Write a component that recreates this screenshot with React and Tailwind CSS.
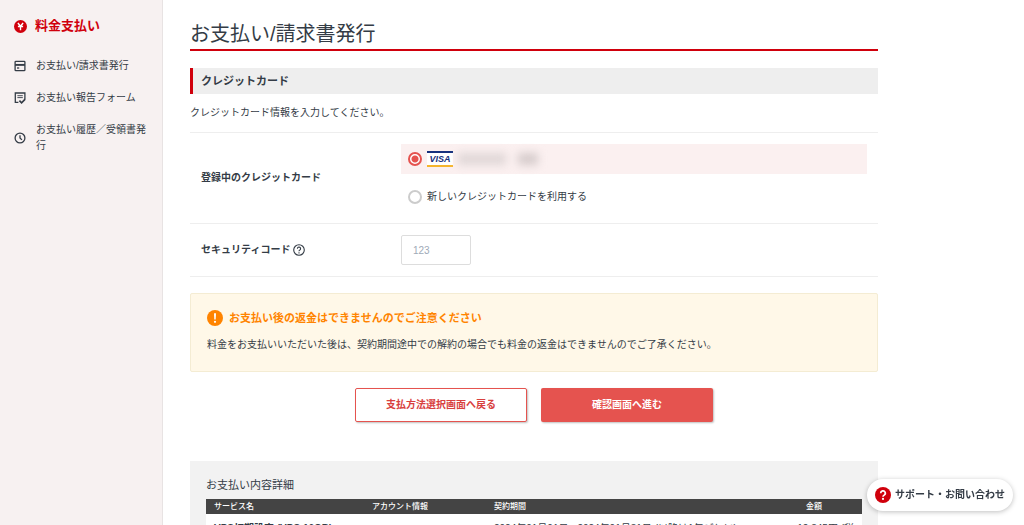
import React, { useState } from 'react';

const navItems = [
  { label: 'お支払い/請求書発行', icon: InvoiceIcon },
  { label: 'お支払い報告フォーム', icon: ReportIcon },
  { label: 'お支払い履歴／受領書発行', icon: ClockIcon },
];

const details = [
  { service: 'VPS初期設定 (VPS 16GB)', account: '-', period: '2024年01月01日 - 2024年01月31日 (以降は1年ごとに)', price: '12,345円 (税込)' },
];

function YenIcon() {
  return (
    <svg className="w-[13px] h-[13px] shrink-0" viewBox="0 0 12 12" fill="none" aria-hidden="true">
      <circle cx="6" cy="6" r="6" fill="#d0000c" />
      <path d="M3.6 2.8 6 5.8l2.4-3M6 5.6v3.8M3.6 6h4.8" stroke="#fff" strokeWidth="1.3" />
    </svg>
  );
}

function InvoiceIcon() {
  return (
    <svg className="w-3 h-3 shrink-0" viewBox="0 0 12 12" fill="none" stroke="#343c46" strokeWidth="1.3" aria-hidden="true">
      <rect x="1.1" y="1.3" width="9.8" height="9.4" rx="0.8" />
      <path d="M1.1 4.9h9.8" strokeWidth="1.9" />
      <path d="M3 8h2.2" />
    </svg>
  );
}

function ReportIcon() {
  return (
    <svg className="w-3 h-3 shrink-0" viewBox="0 0 12 12" fill="none" stroke="#343c46" strokeWidth="1.3" aria-hidden="true">
      <path d="M4.4 10.3H1.3V1h9.6v6" />
      <path d="M3.4 3.7h5.4M3.4 5.6h5.4" strokeWidth="0.9" />
      <path d="M5.4 8.6l2.2 2.2 3.6-3.6" strokeWidth="1.7" />
    </svg>
  );
}

function ClockIcon() {
  return (
    <svg className="w-3 h-3 shrink-0" viewBox="0 0 12 12" fill="none" stroke="#343c46" strokeWidth="1.3" aria-hidden="true">
      <circle cx="6" cy="6" r="4.9" />
      <path d="M6 3.2V6l1.9 1.9" />
    </svg>
  );
}

function HelpIcon() {
  return (
    <svg className="w-3 h-3" viewBox="0 0 12 12" fill="none" stroke="#343c46" strokeWidth="1.1" aria-hidden="true">
      <circle cx="6" cy="6" r="5.3" />
      <path d="M4.4 4.7a1.6 1.6 0 1 1 2.4 1.4c-.6.3-.8.6-.8 1.2" />
      <path d="M6 8.2v1.2" />
    </svg>
  );
}

function AlertIcon() {
  return (
    <svg className="w-4 h-4 shrink-0" viewBox="0 0 16 16" aria-hidden="true">
      <circle cx="8" cy="8" r="8" fill="#ff8400" />
      <path d="M7 3.2h2l-.3 6.2H7.3z" fill="#fff" />
      <circle cx="8" cy="11.8" r="1.1" fill="#fff" />
    </svg>
  );
}

function SupportIcon() {
  return (
    <svg className="w-4 h-4 shrink-0" viewBox="0 0 16 16" fill="none" aria-hidden="true">
      <circle cx="8" cy="8" r="8" fill="#d0000c" />
      <path d="M5.7 6.2a2.3 2.3 0 1 1 3.5 1.9c-.8.5-1.2.8-1.2 1.7" stroke="#fff" strokeWidth="1.7" />
      <circle cx="8" cy="11.9" r="1.1" fill="#fff" />
    </svg>
  );
}

function VisaLogo() {
  return (
    <svg className="w-[26px] h-4 shrink-0" viewBox="0 0 26 16" role="img" aria-label="VISA">
      <rect width="26" height="16" fill="#fff" />
      <rect width="26" height="2" fill="#16317d" />
      <rect y="14" width="26" height="2" fill="#f5b52e" />
      <text x="13" y="11" textAnchor="middle" fontSize="9" fontWeight="bold" fontStyle="italic" fill="#16317d">VISA</text>
    </svg>
  );
}

const radioClass = 'appearance-none w-[14px] h-[14px] shrink-0 rounded-full border-2 border-[#ccc] bg-white checked:border-[#e5534f] checked:bg-[radial-gradient(circle,#e5534f_3px,#fff_4px)] cursor-pointer';

const App = () => {
  const [card, setCard] = useState('saved');
  const [code, setCode] = useState('');

  return (
    <div className="flex h-screen overflow-hidden bg-white text-[10px] leading-4 text-[#343c46] font-['Liberation_Sans','Noto_Sans_CJK_JP',sans-serif]" lang="ja">
      <aside className="w-[163px] shrink-0 border-r border-[#e8e3e3] bg-[#f7f1f1] pl-[14px] pr-4 pt-4">
        <h2 className="flex items-center gap-2 text-[13px] leading-5 font-bold text-[#d0000c]">
          <YenIcon />
          料金支払い
        </h2>
        <nav className="mt-[22px] flex flex-col gap-4">
          {navItems.map(({ label, icon: Icon }) => (
            <a key={label} href="#" className="flex items-center gap-[10px]">
              <Icon />
              <span>{label}</span>
            </a>
          ))}
        </nav>
      </aside>

      <main className="flex-1 pl-[27px] pr-[146px] pt-5">
        <h1 className="border-b-2 border-[#d0000c] pb-px text-[20px] leading-7">お支払い/請求書発行</h1>
        <h2 className="mt-[17px] border-l-3 border-[#d0000c] bg-[#eee] px-2 py-[5px] text-[11px] leading-4 font-bold">クレジットカード</h2>
        <p className="mt-[11px] mb-[11px]">クレジットカード情報を入力してください。</p>

        <form onSubmit={(e) => e.preventDefault()}>
          <fieldset className="flex items-center border-t border-[#eee] px-[11px] py-[11px]" aria-labelledby="card-label">
            <span id="card-label" className="w-[200px] shrink-0 font-bold">登録中のクレジットカード</span>
            <div className="flex-1">
              <label className="flex h-[30px] items-center gap-[5px] bg-[#fbf0f0] px-[7px]">
                <input type="radio" name="card" aria-label="登録中のVISAカード" checked={card === 'saved'} onChange={() => setCard('saved')} className={radioClass} />
                <VisaLogo />
                <span className="flex items-center gap-3 blur-[4px]" aria-hidden="true">
                  <span className="h-3 w-12 bg-[#e0d7d7]" />
                  <span className="h-3 w-5 bg-[#d6cccc]" />
                </span>
              </label>
              <label className="mt-2 flex h-[30px] items-center gap-[5px] px-[7px]">
                <input type="radio" name="card" checked={card === 'new'} onChange={() => setCard('new')} className={radioClass} />
                新しいクレジットカードを利用する
              </label>
            </div>
          </fieldset>
          <div className="flex items-center border-y border-[#eee] px-[11px] py-[11px]">
            <div className="flex w-[200px] shrink-0 items-center gap-[3px] font-bold">
              <label htmlFor="code">セキュリティコード</label>
              <button type="button" aria-label="セキュリティコードとは"><HelpIcon /></button>
            </div>
            <input id="code" type="text" value={code} onChange={(e) => setCode(e.target.value)} placeholder="123"
              className="h-[30px] w-[70px] rounded-xs border border-[#ddd] px-[11px] text-[10px] placeholder:text-[#a0aab8]" />
          </div>

          <section className="mt-4 rounded-xs border border-[#f4ecd3] bg-[#fff8e8] px-4 pt-4 pb-[18px]">
            <h3 className="flex items-center gap-[6px] text-[11px] leading-4 font-bold text-[#ff8400]">
              <AlertIcon />
              お支払い後の返金はできませんのでご注意ください
            </h3>
            <p className="mt-[11px]">料金をお支払いいただいた後は、契約期間途中での解約の場合でも料金の返金はできませんのでご了承ください。</p>
          </section>

          <div className="mt-4 flex justify-center gap-[14px]">
            <button type="button" className="h-[34px] w-[172px] rounded-xs border border-[#e5534f] bg-white font-bold text-[#d8403e] shadow-[1px_1px_2px_rgba(0,0,0,0.25)] cursor-pointer">支払方法選択画面へ戻る</button>
            <button type="submit" className="h-[34px] w-[172px] rounded-xs bg-[#e5534f] font-bold text-white shadow-[1px_1px_2px_rgba(0,0,0,0.25)] cursor-pointer">確認画面へ進む</button>
          </div>
        </form>

        <section className="mt-[39px] bg-[#f2f2f2] p-4">
          <h3 className="text-[11px] leading-4">お支払い内容詳細</h3>
          <table className="mt-[6px] w-full table-fixed bg-white text-left">
            <thead className="bg-[#444] text-[8px] leading-[15px] text-white">
              <tr>
                <th className="w-[158px] px-2 py-0 font-medium">サービス名</th>
                <th className="w-[122px] px-2 py-0 font-medium">アカウント情報</th>
                <th className="px-2 py-0 font-medium">契約期間</th>
                <th className="w-[84px] pl-7 pr-2 py-0 font-medium">金額</th>
              </tr>
            </thead>
            <tbody>
              {details.map((d) => (
                <tr key={d.service} className="align-top">
                  <td className="px-2 py-[7px] font-bold whitespace-nowrap">{d.service}</td>
                  <td className="px-2 py-[7px]">{d.account}</td>
                  <td className="px-2 py-[7px] whitespace-nowrap">{d.period}</td>
                  <td className="px-2 py-[7px] text-right">{d.price}</td>
                </tr>
              ))}
            </tbody>
          </table>
        </section>
      </main>

      <a href="#" className="fixed right-[11px] bottom-[14px] flex h-8 items-center gap-1 rounded-full bg-white px-2 font-bold shadow-[0_1px_5px_rgba(0,0,0,0.25)]">
        <SupportIcon />
        サポート・お問い合わせ
      </a>
    </div>
  );
};

export default App;
